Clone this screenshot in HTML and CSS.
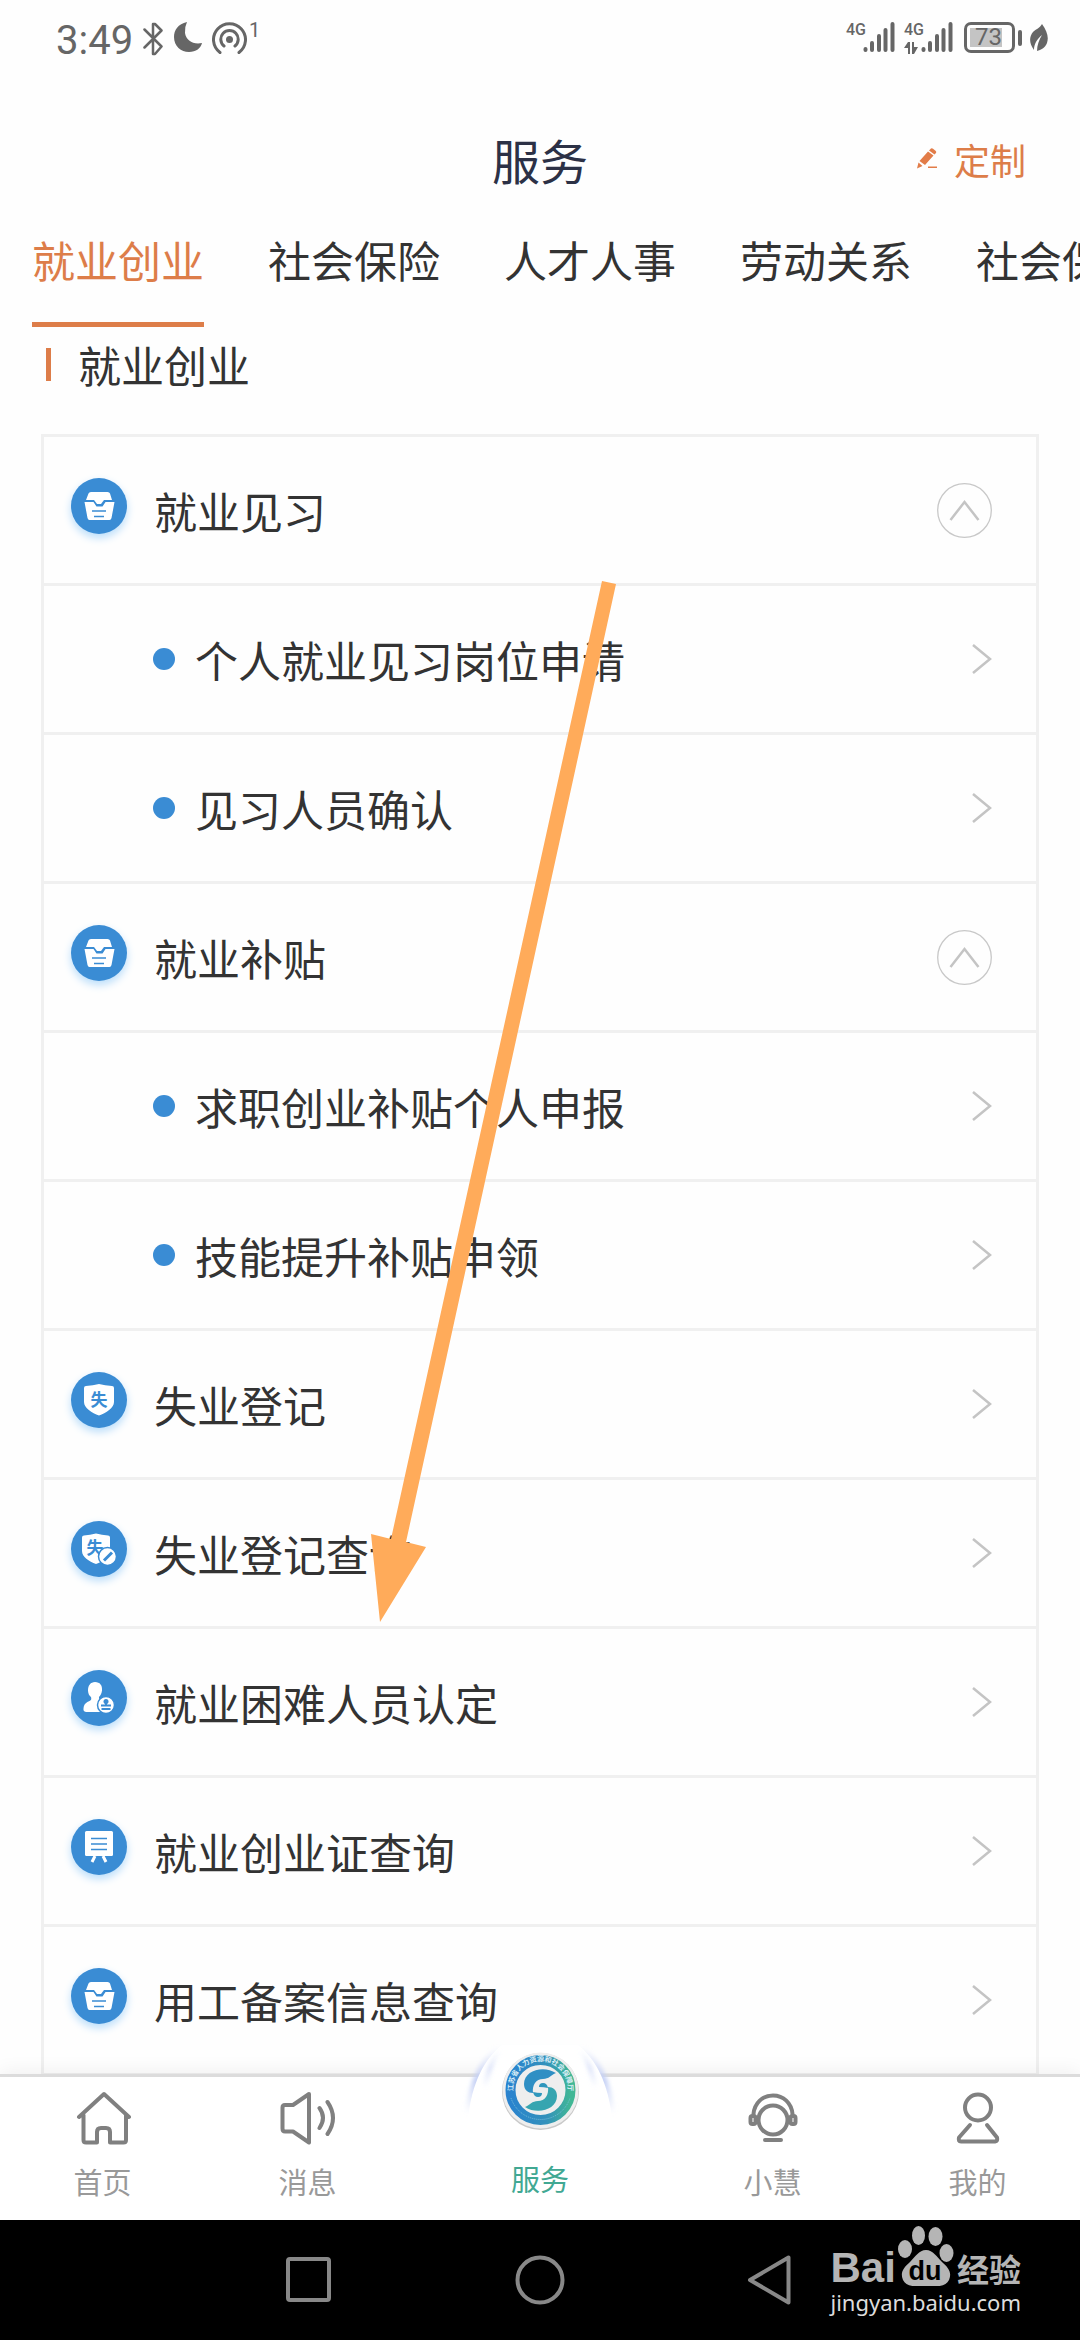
FILE: index.html
```html
<!DOCTYPE html>
<html lang="zh-CN">
<head>
    <meta charset="UTF-8">
    <meta name="viewport" content="width=device-width, initial-scale=1.0">
    <title>服务</title>
    <link rel="stylesheet" href="styles.css">
</head>
<body>
    <svg class="symbols" aria-hidden="true">
        <symbol id="icon-box" viewBox="0 0 56 56">
            <path fill="#fff" d="M20.500 14h16q2 0 2.500 1.500l2 6.500h-8l-3 4h-4l-3-4h-8l2.500-6.500q.5-1.500 2.500-1.500zM13.500 24h9l3 4.500h6l3-4.500h9l-3 16q-.5 2-2 2h-20q-1.500 0-2-2z"/>
            <path stroke="#3a8cd4" stroke-width="1.500" d="M21 33h14M23 38.500h10"/>
        </symbol>
        <symbol id="icon-user" viewBox="0 0 56 56">
            <path fill="#fff" d="M24 12c5 0 7.500 3.500 7 8.500-.3 3-1.500 5-3 6.500 0 3 1 3.500 4 5l6 10h-23q-3-.5-2.500-3.500c.5-5 3-6 6-7.500 2-1 2-2 1.500-4-2-1.500-3-4-3-6.500 0-5 2.500-8.500 7-8.500z"/>
            <circle cx="35" cy="35" r="8.500" fill="#fff" stroke="#3a8cd4" stroke-width="1.500"/>
            <circle cx="35" cy="31.500" r="2.500" fill="#3a8cd4"/>
            <path stroke="#3a8cd4" stroke-width="2" d="M35 32v4M30 35.500h10M30.500 39h9"/>
        </symbol>
        <symbol id="icon-board" viewBox="0 0 56 56">
            <path fill="#fff" d="M15.500 12h25q1.500 0 1.500 1.500v22q0 1.500-1.500 1.500h-25q-1.500 0-1.500-1.500v-22q0-1.500 1.500-1.500z"/>
            <path stroke="#fff" stroke-width="3" d="M24 37l-3 6M32 37l3 6"/>
            <path stroke="#3a8cd4" stroke-width="1.500" d="M20 19.500h16M20 25h16M20 30.500h16"/>
        </symbol>
        <symbol id="icon-next" viewBox="0 0 20 30">
            <path fill="none" stroke="#c4c4c4" stroke-width="2.500" d="M1 1l17 14L1 29"/>
        </symbol>
        <symbol id="icon-up" viewBox="0 0 55 55">
            <circle cx="27.500" cy="27.500" r="26.800" fill="none" stroke="#c8c8c8" stroke-width="1.300"/>
            <path fill="none" stroke="#c4c4c4" stroke-width="2.500" d="M13.500 37l14-18 14 18"/>
        </symbol>
        <symbol id="icon-signal" viewBox="0 0 32 31">
            <path stroke="#666" stroke-width="4" stroke-linecap="round" d="M2.500 27v1M9 21v7M16 14v14M22.500 8v20M29.500 2v26"/>
        </symbol>
    </svg>

    <div class="app">
        <div class="statusbar">
            <div class="status-left">
                <span class="clock">3:49</span>
                <svg width="20" height="34" viewBox="0 0 20 34" fill="none" stroke="#666" stroke-width="2.500" stroke-linejoin="round" stroke-linecap="round"><path d="M1.500 7.500l17 17-6.500 7.500h-2V2h2l6.500 6.500-17 17"/></svg>
                <svg class="moon" width="28" height="30" viewBox="0 0 28 30"><path fill="#666" d="M13 0C4 2 0 8 0 15c0 9 7 15 15 15 7 0 12-4 13-9-9 2-16-3-17-10q-.5-6 2-11z"/></svg>
                <svg class="hotspot" width="35" height="32" viewBox="0 0 35 32" fill="none" stroke="#666" stroke-width="3" stroke-linecap="round"><path d="M8 30.500a16 16 0 1 1 19 0M12 24a8.700 8.700 0 1 1 11 0"/><circle cx="17.500" cy="17.500" r="3.500" fill="#666" stroke="none"/></svg>
                <span class="count">1</span>
            </div>
            <div class="status-right">
                <span class="net">4G</span>
                <svg width="32" height="31"><use href="#icon-signal"/></svg>
                <div class="net net-second">4G
                    <svg width="14" height="12" viewBox="0 0 14 12"><path fill="#666" d="M0 6l4-6h2v12H4V6zM8 0h2v5h4l-4 7H8z"/></svg>
                </div>
                <svg width="32" height="31"><use href="#icon-signal"/></svg>
                <div class="battery"><span>73</span></div>
                <svg class="leaf" width="18" height="28" viewBox="0 0 18 28"><path fill="#666" d="M12 0c5 7 7 13 5 19-2 5-6 7-10 8 0-6 2-11 5-16-5 4-8 9-8 15C-1 19-1 13 3 8c3-3 7-4 9-8z"/></svg>
            </div>
        </div>

        <header class="header">
            <h1>服务</h1>
            <button class="customize" type="button">
                <svg width="20" height="21" viewBox="0 0 20 21"><path fill="#e27c48" d="M13 1.500q1.500-2 3-.8l2.500 2q1.500 1.300 0 2.800l-1 1-5.500-4zM11 3.500l5.500 4L8 17l-5.500-4zM1.500 14.500l4 3.500L0 20.500zM11 18.500h9v1.500h-9z"/></svg>
                定制
            </button>
        </header>

        <nav class="tabs">
            <a class="tab active" href="#">就业创业</a>
            <a class="tab" href="#">社会保险</a>
            <a class="tab" href="#">人才人事</a>
            <a class="tab" href="#">劳动关系</a>
            <a class="tab" href="#">社会保障</a>
        </nav>

        <main class="content">
            <h2>就业创业</h2>
            <div class="list">
                <button class="row" type="button"><svg class="badge"><use href="#icon-box"/></svg><span>就业见习</span><svg class="up"><use href="#icon-up"/></svg></button>
                <a class="row sub" href="#"><span>个人就业见习岗位申请</span><svg class="next"><use href="#icon-next"/></svg></a>
                <a class="row sub" href="#"><span>见习人员确认</span><svg class="next"><use href="#icon-next"/></svg></a>
                <button class="row" type="button"><svg class="badge"><use href="#icon-box"/></svg><span>就业补贴</span><svg class="up"><use href="#icon-up"/></svg></button>
                <a class="row sub" href="#"><span>求职创业补贴个人申报</span><svg class="next"><use href="#icon-next"/></svg></a>
                <a class="row sub" href="#"><span>技能提升补贴申领</span><svg class="next"><use href="#icon-next"/></svg></a>
                <a class="row" href="#">
                    <svg class="badge" viewBox="0 0 56 56">
                        <path fill="#fff" d="M13 16q0-2 2-2 7-.5 13-2 6 1.500 13 2 2 0 2 2v14c0 6-8 11-15 13.500-7-2.500-15-7.500-15-13.500z"/>
                        <text class="shield-text" x="28" y="34" text-anchor="middle">失</text>
                    </svg>
                    <span>失业登记</span><svg class="next"><use href="#icon-next"/></svg>
                </a>
                <a class="row" href="#">
                    <svg class="badge" viewBox="0 0 56 56">
                        <path fill="#fff" d="M11 16.500q0-2 2-2 6-.5 12-2 6 1.500 12 2 2 0 2 2V30c0 6-7 10.500-14 13-7-2.500-14-7-14-13z"/>
                        <text class="shield-text" x="24" y="33" text-anchor="middle">失</text>
                        <circle cx="36.500" cy="35.500" r="9" fill="#fff" stroke="#3a8cd4" stroke-width="1.500"/>
                        <path stroke="#3a8cd4" stroke-width="3" d="M33 39.500l8-8"/>
                    </svg>
                    <span>失业登记查询</span><svg class="next"><use href="#icon-next"/></svg>
                </a>
                <a class="row" href="#"><svg class="badge"><use href="#icon-user"/></svg><span>就业困难人员认定</span><svg class="next"><use href="#icon-next"/></svg></a>
                <a class="row" href="#"><svg class="badge"><use href="#icon-board"/></svg><span>就业创业证查询</span><svg class="next"><use href="#icon-next"/></svg></a>
                <a class="row" href="#"><svg class="badge"><use href="#icon-box"/></svg><span>用工备案信息查询</span><svg class="next"><use href="#icon-next"/></svg></a>
            </div>
        </main>

        <footer class="footer">
            <nav class="tabbar">
                <a href="#">
                    <svg width="56" height="56" viewBox="0 0 56 56" fill="none" stroke="#808080" stroke-width="4" stroke-linejoin="round" stroke-linecap="round"><path d="M4 27L29 4l25 23M8.500 25v25q0 2.500 2.500 2.500h11V42q0-4 4-4h5q4 0 4 4v10.500h13.500q2.500 0 2.500-2.500V25"/></svg>
                    首页
                </a>
                <a href="#">
                    <svg width="56" height="56" viewBox="0 0 56 56" fill="none" stroke="#808080" stroke-width="4" stroke-linejoin="round" stroke-linecap="round"><path d="M5 15q-2.500 0-2.500 2.500v21q0 3 2.500 3h8l16 11V4L13 15zM39.500 18q7 9.500 0 20M47.500 12q11 16 0 32"/></svg>
                    消息
                </a>
                <a class="center" href="#">
                    <svg class="logo" viewBox="0 0 160 100">
                        <defs>
                            <linearGradient id="ring" x1="0" y1="0" x2="1" y2="0"><stop offset="0" stop-color="#2a83ce"/><stop offset=".6" stop-color="#3391bb"/><stop offset="1" stop-color="#41b795"/></linearGradient>
                            <linearGradient id="glow" x1="0" y1="0" x2="0" y2="1"><stop offset="0" stop-color="#d3dcf8" stop-opacity="0"/><stop offset=".5" stop-color="#c3cff5"/><stop offset="1" stop-color="#d3dcf8" stop-opacity="0"/></linearGradient>
                            <filter id="soft" x="-30%" y="-10%" width="160%" height="120%"><feGaussianBlur stdDeviation="2"/></filter>
                        </defs>
                        <path fill="url(#glow)" filter="url(#soft)" d="M5 70C9 38 19 14 38 2h84c19 12 29 36 33 68z"/>
                        <path fill="#fff" d="M8 74C12 40 23 16 42 1h76c19 15 30 39 34 73z"/>
                        <path fill="url(#glow)" filter="url(#soft)" opacity=".7" d="M23 42C26 25 33 11 42 4 35 15 30 27 27 44zM137 42C134 25 127 11 118 4c7 11 12 23 15 40z"/>
                        <circle cx="80.500" cy="47.500" r="38.500" fill="#c9c9c9"/>
                        <circle cx="80.500" cy="46.500" r="38" fill="#eee"/>
                        <circle cx="80.500" cy="46" r="30" fill="none" stroke="url(#ring)" stroke-width="10"/>
                        <path id="arc" fill="none" d="M53.500 50a27.500 27.500 0 1 1 54 0"/>
                        <text class="ring-text" text-anchor="middle"><textPath href="#arc" startOffset="50%">江苏省人力资源和社会保障厅</textPath></text>
                        <path fill="none" stroke="#79bfdc" stroke-width="1" stroke-dasharray="1 1" d="M51 54a31 31 0 0 0 59 0"/>
                        <path fill="#2f8fc4" d="M96 29C84 21 64 26 64 40c0 6 4 9 9 9-1-8 3-14 10-14 6 0 8-4 13-6z"/>
                        <path fill="#36a5b0" d="M65 63c12 8 32 3 32-11 0-6-4-9-9-9 1 8-3 14-10 14-6 0-8 4-13 6z"/>
                        <path fill="#2f97bd" d="M79 43q0-4 4-4t5 5q-4-1-9-1zM82 49q0 4-4 4t-5-5q4 1 9 1z"/>
                    </svg>
                    服务
                </a>
                <a href="#">
                    <svg width="56" height="56" viewBox="0 0 56 56" fill="none" stroke="#808080" stroke-width="4" stroke-linecap="round"><circle cx="28" cy="30" r="14.500"/><path d="M8.500 24c1-11 9-18.500 19.500-18.500S46.500 13 47.500 24M20 50h16"/><rect x="5.500" y="26" width="5" height="8" rx="2"/><rect x="45.500" y="26" width="5" height="8" rx="2"/></svg>
                    小慧
                </a>
                <a href="#">
                    <svg width="56" height="56" viewBox="0 0 56 56" fill="none" stroke="#808080" stroke-width="4" stroke-linejoin="round" stroke-linecap="round"><circle cx="28" cy="17.500" r="13"/><path d="M20 35L9 47.500Q8 51.500 11 51.500H45Q48 51 47 47.500L37 35"/></svg>
                    我的
                </a>
            </nav>
            <div class="sysbar">
                <button type="button" aria-label="最近任务"><svg width="50" height="50" viewBox="0 0 50 50" fill="none" stroke="#888" stroke-width="4"><rect x="4" y="4" width="41" height="41" rx="2"/></svg></button>
                <button type="button" aria-label="主屏幕"><svg width="50" height="50" viewBox="0 0 50 50" fill="none" stroke="#888" stroke-width="4"><circle cx="25" cy="25" r="22.500"/></svg></button>
                <button type="button" aria-label="返回"><svg width="50" height="50" viewBox="0 0 50 50" fill="none" stroke="#888" stroke-width="4" stroke-linejoin="round"><path d="M42.500 2.500v45L4 25z"/></svg></button>
            </div>
            <div class="watermark">
                <div class="brand">
                    <span class="bai">Bai</span>
                    <svg width="56" height="60" viewBox="0 0 56 60"><g fill="#b5b5b5"><ellipse cx="7" cy="23" rx="7" ry="9"/><ellipse cx="20.500" cy="9.500" rx="6.500" ry="9.500"/><ellipse cx="37.500" cy="10.500" rx="7" ry="9.500"/><ellipse cx="48.500" cy="27" rx="7" ry="9"/><path d="M28 24c7 0 11 7 16 12 7 6 10 11 7 18-3 6-9 7-23 6-14 1-20 0-23-6-3-7 0-12 7-18 5-5 9-12 16-12z"/></g><text class="du" x="27" y="54" text-anchor="middle">du</text></svg>
                    <span class="jingyan">经验</span>
                </div>
                <div class="site">jingyan.baidu.com</div>
            </div>
        </footer>

        <svg class="arrow" viewBox="0 0 248 1042" aria-hidden="true">
            <path fill="#ffab5a" d="M233 0l14 3L37 961l20 5L11 1041 2 953l20 5z"/>
        </svg>
    </div>
</body>
</html>
```

FILE: styles.css
```css
* {
    box-sizing: border-box;
}
body {
    margin: 0;
    background: #fefefe;
    color: #333;
    font-family: "Noto Sans CJK SC", sans-serif;
    font-size: 43px;
}
a {
    color: inherit;
    text-decoration: none;
}
button {
    padding: 0;
    border: none;
    background: none;
    color: inherit;
    font: inherit;
}
svg {
    display: block;
    flex-shrink: 0;
}
.symbols {
    position: absolute;
    width: 0;
    height: 0;
}
.app {
    position: relative;
    display: flex;
    flex-direction: column;
    height: 100vh;
    overflow: hidden;
}

/* status bar */
.statusbar {
    display: flex;
    justify-content: space-between;
    height: 90px;
    padding: 22px 32px 0 56px;
    color: #666;
    font-family: Roboto, sans-serif;
}
.status-left,
.status-right {
    display: flex;
    align-items: flex-start;
}
.clock {
    width: 87px;
    font-size: 40px;
    line-height: 37px;
}
.moon {
    margin-left: 11px;
}
.hotspot {
    margin-left: 10px;
}
.count {
    margin-left: 2px;
    font-size: 20px;
    line-height: 16px;
}
.net {
    width: 17px;
    font-size: 16px;
    font-weight: 500;
    line-height: 16px;
    white-space: nowrap;
}
.net-second {
    margin-left: 9px;
}
.net-second svg {
    margin-top: 4px;
}
.battery {
    position: relative;
    width: 51px;
    height: 31px;
    margin: 0 15px 0 11px;
    padding: 3px;
    border: 3px solid #666;
    border-radius: 7px;
}
.battery span {
    display: block;
    width: 32px;
    background: #c4c4c4;
    font-size: 24px;
    line-height: 19px;
    text-align: right;
}
.battery::after {
    content: "";
    position: absolute;
    top: 5px;
    right: -10px;
    width: 4px;
    height: 16px;
    border-radius: 2px;
    background: #666;
}
.leaf {
    margin-top: 2px;
}

/* header */
.header {
    display: grid;
    grid-template-columns: 1fr auto 1fr;
    align-items: center;
    height: 137px;
}
.header h1 {
    grid-column: 2;
    margin: 0;
    color: #2c3146;
    font-size: 48px;
    font-weight: 400;
}
.customize {
    display: flex;
    align-items: center;
    justify-self: end;
    gap: 17px;
    margin-right: 54px;
    color: #dd7d49;
    font-size: 36px;
}

/* category tabs */
.tabs {
    display: flex;
    gap: 64px;
    height: 100px;
    padding-left: 32px;
    overflow: hidden;
}
.tab {
    flex-shrink: 0;
    height: 100px;
    line-height: 64px;
    white-space: nowrap;
}
.tab.active {
    border-bottom: 5px solid #dd7d49;
    color: #dd7d49;
}

/* service list */
.content {
    flex: 1;
    min-height: 0;
    overflow: hidden;
    padding: 8px 41px 0;
}
.content h2 {
    display: flex;
    align-items: center;
    gap: 27px;
    margin: 0 0 41px;
    padding-left: 5px;
    font-size: 43px;
    font-weight: 400;
    line-height: 58px;
}
.content h2::before {
    content: "";
    width: 5px;
    height: 33px;
    background: #dd7d49;
}
.list {
    border: 3px solid #f0f0f0;
    border-bottom: none;
}
.row {
    display: flex;
    align-items: center;
    width: 100%;
    height: 149px;
    padding: 0 44px 0 27px;
    border-bottom: 3px solid #f0f0f0;
    text-align: left;
}
.row span {
    flex: 1;
}
.badge {
    width: 56px;
    height: 56px;
    margin: 0 27px 8px 0;
    border-radius: 50%;
    background: #3a8cd4;
    box-shadow: 0 4px 8px #b9ddfa;
}
.shield-text {
    fill: #3a8cd4;
    font-size: 17px;
    font-weight: 700;
}
.sub {
    padding-left: 109px;
}
.sub::before {
    content: "";
    width: 22px;
    height: 22px;
    margin-right: 20px;
    border-radius: 50%;
    background: #3a8cd4;
}
.next {
    width: 20px;
    height: 30px;
}
.up {
    width: 55px;
    height: 55px;
}

/* bottom bars */
.footer {
    position: relative;
}
.tabbar {
    display: grid;
    grid-template-columns: 205fr 205fr 260fr 205fr 205fr;
    height: 146px;
    border-top: 3px solid #dcdcdc;
    background: #fff;
    box-shadow: 0 -3px 18px rgba(0, 0, 0, 0.06);
    color: #999;
    font-size: 29px;
    line-height: 42px;
}
.tabbar a {
    display: flex;
    flex-direction: column;
    align-items: center;
    gap: 14px;
    padding-top: 13px;
}
.tabbar .center {
    position: relative;
    padding-top: 80px;
    color: #41a893;
}
.logo {
    position: absolute;
    top: -33px;
    width: 160px;
    height: 100px;
}
.ring-text {
    fill: #d9edf7;
    font-size: 7px;
    font-weight: 700;
}
.sysbar {
    display: flex;
    justify-content: center;
    align-items: center;
    gap: 181px;
    height: 120px;
    background: #000;
}
.watermark {
    position: absolute;
    right: 59px;
    bottom: 22px;
    color: #b5b5b5;
}
.brand {
    display: flex;
    align-items: flex-end;
    justify-content: space-between;
}
.bai {
    font-family: "Liberation Sans", sans-serif;
    font-size: 42px;
    font-weight: 700;
    line-height: 36px;
}
.du {
    fill: #000;
    font-family: "Liberation Sans", sans-serif;
    font-size: 27px;
    font-weight: 700;
}
.jingyan {
    font-size: 32px;
    font-weight: 700;
    line-height: 36px;
}
.site {
    color: #ddd;
    font-family: "Noto Sans", sans-serif;
    font-size: 22px;
    line-height: 32px;
}

/* pointer drawn over the list */
.arrow {
    position: absolute;
    top: 581px;
    left: 369px;
    width: 248px;
    height: 1042px;
}
```
